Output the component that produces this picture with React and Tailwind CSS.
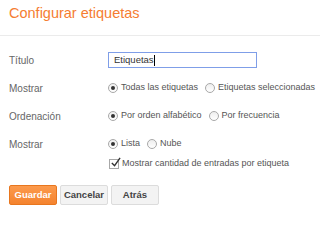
export default function App() {
  const label = 'w-[99px] shrink-0 text-[10px] text-[#666]'
  const opt = 'text-[9px] text-[#555] whitespace-nowrap'

  const Radio = ({ checked }) => (
    <span className="relative inline-block w-[10px] h-[10px] rounded-full border border-[#a8a8a8] bg-gradient-to-b from-[#eeeeee] to-white shrink-0">
      {checked && (
        <span className="absolute left-[2px] top-[2px] w-[4px] h-[4px] rounded-full bg-[#333]" />
      )}
    </span>
  )

  return (
    <div className="w-[320px] h-[241px] bg-white font-['Liberation_Sans',Arial,sans-serif] overflow-hidden">
      <div className="h-[36px] border-b border-[#ebebeb] px-[9px] pt-[3px]">
        <h1 className="text-[14.5px] leading-[20px] text-[#f57d31]">Configurar etiquetas</h1>
      </div>

      <div className="px-[9px] pt-[16px]">
        {/* Título */}
        <div className="flex items-center h-[16px]">
          <div className={label}>Título</div>
          <div className="w-[149px] h-[16px] border border-[#7f9ee8] px-[5px] flex items-center text-[9.5px] text-[#333]">
            Etiquetas<span className="inline-block w-px h-[11px] bg-black" />
          </div>
        </div>

        {/* Mostrar */}
        <div className="flex items-center h-[16px] mt-[12px]">
          <div className={label}>Mostrar</div>
          <div className="flex items-center gap-[3px]">
            <Radio checked />
            <span className={opt}>Todas las etiquetas</span>
            <span className="w-px" />
            <Radio />
            <span className={opt}>Etiquetas seleccionadas</span>
          </div>
        </div>

        {/* Ordenación */}
        <div className="flex items-center h-[16px] mt-[12px]">
          <div className={label}>Ordenación</div>
          <div className="flex items-center gap-[3px]">
            <Radio checked />
            <span className={opt}>Por orden alfabético</span>
            <span className="w-px" />
            <Radio />
            <span className={opt}>Por frecuencia</span>
          </div>
        </div>

        {/* Mostrar lista/nube */}
        <div className="flex items-center h-[16px] mt-[12px]">
          <div className={label}>Mostrar</div>
          <div className="flex items-center gap-[3px]">
            <Radio checked />
            <span className={opt}>Lista</span>
            <span className="w-px" />
            <Radio />
            <span className={opt}>Nube</span>
          </div>
        </div>

        <div className="flex items-center h-[16px] mt-[4px] pl-[100px] gap-[3px]">
          <span className="relative w-[10px] h-[10px] border border-[#a8a8a8] bg-white shrink-0">
            <svg viewBox="0 0 12 12" className="absolute -top-[3px] left-0 w-[11px] h-[11px]">
              <path d="M2 6.5 L5 9.5 L11 1" fill="none" stroke="#333" strokeWidth="1.5" />
            </svg>
          </span>
          <span className={opt}>Mostrar cantidad de entradas por etiqueta</span>
        </div>

        <div className="flex gap-[3px] mt-[13px]">
          <button className="w-[48px] h-[20px] rounded-[2px] border border-[#e8761e] bg-gradient-to-b from-[#fc9a4c] to-[#f4832e] text-white text-[9.5px] font-bold">
            Guardar
          </button>
          <button className="w-[48px] h-[20px] rounded-[2px] border border-[#dcdcdc] bg-[#f3f3f3] text-[#444] text-[9.5px] font-bold">
            Cancelar
          </button>
          <button className="w-[48px] h-[20px] rounded-[2px] border border-[#dcdcdc] bg-[#f3f3f3] text-[#444] text-[9.5px] font-bold">
            Atrás
          </button>
        </div>
      </div>
    </div>
  )
}
